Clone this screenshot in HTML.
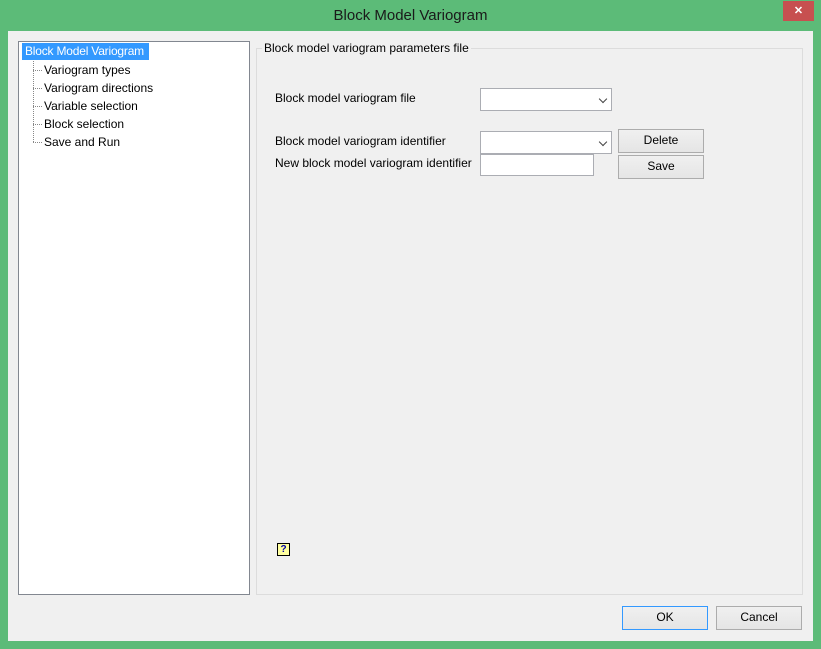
<!DOCTYPE html>
<html><head><style>
*{margin:0;padding:0;box-sizing:border-box}
body{width:821px;height:649px;background:#5cbb78;font-family:"Liberation Sans",sans-serif;font-size:12px;color:#000;position:relative;overflow:hidden}
.a{position:absolute}
.title{left:0;width:821px;text-align:center;top:7px;font-size:15px;color:#1a1a1a}
.close{left:783px;top:1px;width:31px;height:20px;background:#c75050;color:#fff;text-align:center;font-size:11px;line-height:20px;font-weight:bold}
.client{left:8px;top:31px;width:805px;height:610px;background:#f0f0f0}
.tree{left:18px;top:41px;width:232px;height:554px;background:#fff;border:1px solid #828790}
.sel{left:22px;top:43px;width:127px;height:17px;background:#3399ff;color:#fff;padding-left:3px;line-height:17px;font-size:12px;letter-spacing:-0.2px;white-space:nowrap}
.it{left:44px;font-size:12px;line-height:14px}
.dv{border-left:1px dotted #888}
.dh{border-top:1px dotted #888;width:9px;height:0}
.grp{left:256px;top:48px;width:547px;height:547px;border:1px solid #dcdcdc}
.lg{left:262px;top:41px;background:#f0f0f0;padding:0 2px}
.cb{background:#fff;border:1px solid #abadb3}
.cb:after{content:"";position:absolute;right:5px;top:7px;width:5px;height:5px;border-right:1.5px solid #444;border-bottom:1.5px solid #444;transform:rotate(45deg)}
.btn{background:linear-gradient(#f0f0f0,#e5e5e5);border:1px solid #acacac;text-align:center;line-height:21px}
</style></head><body>
<div class="a title">Block Model Variogram</div>
<div class="a close">✕</div>
<div class="a client"></div>
<div class="a tree"></div>
<div class="a sel">Block Model Variogram</div>
<div class="a dv" style="left:33px;top:61px;height:81px"></div>
<div class="a dh" style="left:33px;top:70px"></div>
<div class="a dh" style="left:33px;top:88px"></div>
<div class="a dh" style="left:33px;top:106px"></div>
<div class="a dh" style="left:33px;top:124px"></div>
<div class="a dh" style="left:33px;top:142px"></div>
<div class="a it" style="top:63px">Variogram types</div>
<div class="a it" style="top:81px">Variogram directions</div>
<div class="a it" style="top:99px">Variable selection</div>
<div class="a it" style="top:117px">Block selection</div>
<div class="a it" style="top:135px">Save and Run</div>
<div class="a grp"></div>
<div class="a lg">Block model variogram parameters file</div>
<div class="a" style="left:275px;top:91px">Block model variogram file</div>
<div class="a cb" style="left:480px;top:88px;width:132px;height:23px"></div>
<div class="a" style="left:275px;top:134px">Block model variogram identifier</div>
<div class="a cb" style="left:480px;top:131px;width:132px;height:23px"></div>
<div class="a" style="left:275px;top:156px">New block model variogram identifier</div>
<div class="a" style="left:480px;top:154px;width:114px;height:22px;background:#fff;border:1px solid #abadb3"></div>
<div class="a btn" style="left:618px;top:129px;width:86px;height:24px">Delete</div>
<div class="a btn" style="left:618px;top:155px;width:86px;height:24px">Save</div>
<div class="a" style="left:277px;top:543px;width:13px;height:13px;background:#ffffa0;border:1px solid #000;font-size:10px;font-weight:bold;color:#00a;text-align:center;line-height:11px">?</div>
<div class="a btn" style="left:622px;top:606px;width:86px;height:24px;border-color:#3399ff">OK</div>
<div class="a btn" style="left:716px;top:606px;width:86px;height:24px">Cancel</div>
</body></html>
